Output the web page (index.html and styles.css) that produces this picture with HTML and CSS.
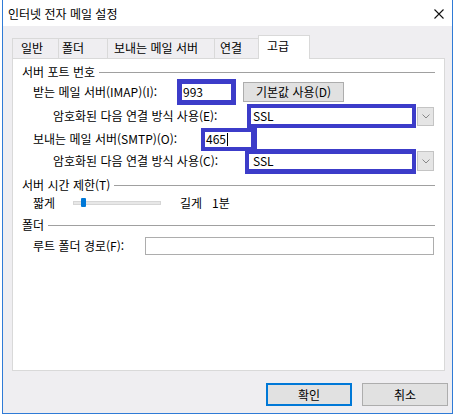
FILE: index.html
```html
<!DOCTYPE html>
<html lang="ko">
<head>
  <meta charset="UTF-8">
  <title>인터넷 전자 메일 설정</title>
  <link rel="stylesheet" href="styles.css">
</head>
<body>

<div class="window">
  <!-- Title bar -->
  <div class="titlebar">
    <span class="title">인터넷 전자 메일 설정</span>
    <svg class="close" width="10" height="10" viewBox="0 0 10 10">
      <path d="M0.5 0.5 L9.5 9.5 M9.5 0.5 L0.5 9.5" stroke="#111" stroke-width="1.1" fill="none"/>
    </svg>
  </div>

  <div class="content">
    <!-- Tabs -->
    <div class="tabs">
      <div class="tab tab-general">일반</div>
      <div class="tab tab-folder">폴더</div>
      <div class="tab tab-outgoing">보내는 메일 서버</div>
      <div class="tab tab-connect">연결</div>
      <div class="tab tab-advanced active">고급</div>
    </div>

    <div class="panel">
      <div class="group-head">
        <span>서버 포트 번호</span>
        <span class="rule"></span>
      </div>

      <div class="row row-imap">
        <span class="label label-imap">받는 메일 서버(IMAP)(I):</span>
        <span class="mark mark-imap">993</span>
        <button class="btn btn-default">기본값 사용(D)</button>
      </div>

      <div class="row row-enc1">
        <span class="label label-enc1">암호화된 다음 연결 방식 사용(E):</span>
        <span class="mark mark-ssl1">SSL</span>
        <span class="drop"><svg width="8" height="5" viewBox="0 0 8 5"><path d="M0.5 0.5 L4 4 L7.5 0.5" stroke="#888" fill="none"/></svg></span>
      </div>

      <div class="row row-smtp">
        <span class="label label-smtp">보내는 메일 서버(SMTP)(O):</span>
        <span class="mark mark-smtp">465<span class="caret"></span></span>
      </div>

      <div class="row row-enc2">
        <span class="label label-enc2">암호화된 다음 연결 방식 사용(C):</span>
        <span class="mark mark-ssl2">SSL</span>
        <span class="drop drop2"><svg width="8" height="5" viewBox="0 0 8 5"><path d="M0.5 0.5 L4 4 L7.5 0.5" stroke="#888" fill="none"/></svg></span>
      </div>

      <div class="group-head head-timeout">
        <span>서버 시간 제한(T)</span>
        <span class="rule"></span>
      </div>

      <div class="row row-slider">
        <span class="label label-short">짧게</span>
        <span class="track"><span class="thumb"></span></span>
        <span class="label label-long">길게</span>
        <span class="label">1분</span>
      </div>

      <div class="group-head head-folder">
        <span>폴더</span>
        <span class="rule"></span>
      </div>

      <div class="row row-root">
        <span class="label label-root">루트 폴더 경로(F):</span>
        <span class="field"></span>
      </div>
    </div>

    <div class="footer">
      <button class="btn btn-ok">확인</button>
      <button class="btn btn-cancel">취소</button>
    </div>
  </div>
</div>

</body>
</html>
```

FILE: styles.css
```css
body {
  margin: 0;
  background: #ffffff;
  font-family: "Noto Sans CJK KR", "Noto Sans", sans-serif;
  font-size: 12px;
  line-height: 16px;
  color: #000;
}

.window {
  box-sizing: border-box;
  width: 451px;
  height: 414px;
  margin-left: 2px;
  border: 1px solid #2f7bd6;
  border-top: none;
  background: #efeef1;
}

.titlebar {
  height: 26px;
  background: #fff;
  display: flex;
  align-items: center;
}
.title {
  padding-left: 5px;
  margin-top: 1px;
}
.close {
  margin-left: auto;
  margin-right: 8px;
  margin-top: 1px;
}

.content {
  padding: 9px 0 0 9px;
}

/* Tabs */
.tabs {
  display: flex;
  align-items: flex-end;
  height: 23px;
  position: relative;
  z-index: 1;
}
.tab {
  box-sizing: border-box;
  height: 20px;
  line-height: 18px;
  border: 1px solid #d9d9d9;
  border-bottom: none;
  border-left: none;
  white-space: nowrap;
}
.tab-general { width: 47px; padding-left: 8px; border-left: 1px solid #d9d9d9; }
.tab-folder { width: 49px; padding-left: 3px; }
.tab-outgoing { width: 107px; padding-left: 6px; }
.tab-connect { width: 44px; padding-left: 5px; }
.tab.active {
  width: 52px;
  height: 24px;
  margin-bottom: -1px;
  padding-left: 8px;
  line-height: 19px;
  background: #fff;
  border-left: 1px solid #d9d9d9;
  margin-left: -1px;
}

.panel {
  box-sizing: border-box;
  width: 433px;
  height: 313px;
  background: #fff;
  border: 1px solid #d9d9d9;
  padding: 5px 9px 0 9px;
}

.group-head {
  display: flex;
  align-items: center;
  height: 16px;
}
.rule {
  flex: 1;
  height: 1px;
  background: #a0a0a0;
  margin-left: 4px;
  margin-top: 1px;
}
.head-timeout { margin-top: 5px; }
.head-folder { margin-top: 4px; }

.row {
  display: flex;
  align-items: center;
  padding-left: 11px;
  white-space: nowrap;
}
.row-imap { height: 24px; }
.row-enc1 { height: 24px; padding-left: 31px; }
.row-smtp { height: 22px; }
.row-enc2 { height: 22px; padding-left: 31px; }
.row-slider { height: 20px; }
.row-root { height: 24px; margin-top: 1px; }

.label-imap { width: 144px; }
.label-enc1 { width: 194px; }
.label-smtp { width: 168px; }
.label-enc2 { width: 192px; }
.label-short { width: 40px; }
.label-long { width: 32px; }
.label-root { width: 112px; }

/* Blue highlight boxes around the fields */
.mark {
  box-sizing: border-box;
  flex: none;
  background: #fff;
  border: 5px solid #3c3cc9;
  padding-left: 1px;
  line-height: 14px;
  display: flex;
  align-items: center;
}
.mark-imap { width: 59px; height: 26px; }
.mark-ssl1 { width: 169px; height: 24px; border-width: 4px; padding-left: 2px; }
.mark-smtp { width: 56px; height: 23px; border-width: 4px 6px 4px 4px; }
.mark-ssl2 { width: 171px; height: 25px; border-width: 5px 4px; padding-left: 4px; }
.caret {
  width: 1px;
  height: 13px;
  background: #000;
  margin-left: 1px;
}

.drop {
  box-sizing: border-box;
  width: 17px;
  height: 19px;
  margin-left: 1px;
  background: #e5e5e5;
  border: 1px solid #c4c4c4;
  display: flex;
  align-items: center;
  justify-content: center;
}
.drop2 { height: 20px; }

.btn {
  box-sizing: border-box;
  font-family: inherit;
  font-size: 12px;
  line-height: 16px;
  color: #000;
  background: #e1e1e1;
  border: 1px solid #adadad;
  padding: 0;
  margin: 0;
}
.btn-default {
  width: 101px;
  height: 20px;
  margin-left: 7px;
}

/* Slider */
.track {
  position: relative;
  box-sizing: border-box;
  width: 88px;
  height: 4px;
  background: #e7e7e7;
  border: 1px solid #d6d6d6;
  margin-right: 19px;
  margin-top: -1px;
}
.thumb {
  position: absolute;
  left: 7px;
  top: -4px;
  width: 5px;
  height: 9px;
  background: #0078d7;
  border-radius: 1px;
}

.field {
  box-sizing: border-box;
  width: 289px;
  height: 18px;
  border: 1px solid #adadad;
  background: #fff;
}

.footer {
  display: flex;
  justify-content: flex-end;
  gap: 10px;
  margin-top: 12px;
  padding-right: 4px;
}
.btn-ok {
  width: 86px;
  height: 23px;
  border: 2px solid #0078d7;
}
.btn-cancel {
  width: 86px;
  height: 23px;
}
```
